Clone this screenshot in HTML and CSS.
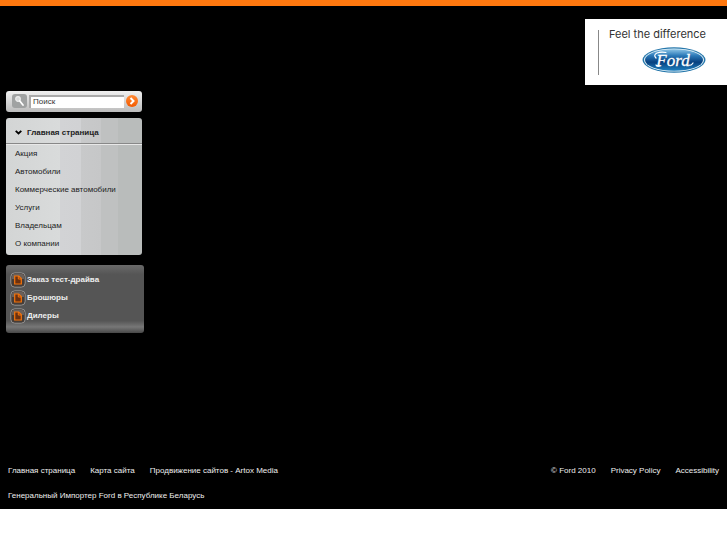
FILE: index.html
```html
<!DOCTYPE html>
<html lang="ru">
<head>
<meta charset="utf-8">
<title>Ford</title>
<link rel="stylesheet" href="styles.css">
</head>
<body>
<div class="page">
  <header class="header">
    <a class="brand" href="#">
      <span class="slogan">Feel the difference</span>
      <svg class="oval" viewBox="0 0 64 26" role="img" aria-label="Ford">
        <defs>
          <linearGradient id="blue" x1="0" y1="0" x2="0" y2="1">
            <stop offset="0" stop-color="#8cc4e6"/>
            <stop offset=".3" stop-color="#2b79b8"/>
            <stop offset=".6" stop-color="#07407f"/>
            <stop offset="1" stop-color="#1e80c0"/>
          </linearGradient>
        </defs>
        <ellipse cx="32" cy="13" rx="31.5" ry="12.7" fill="#2677ab"/>
        <ellipse cx="32" cy="13" rx="30" ry="11.6" fill="#e4f2f8"/>
        <ellipse cx="32" cy="13" rx="29" ry="10.8" fill="url(#blue)"/>
        <text class="script" x="31" y="19" text-anchor="middle">Ford</text>
        <path d="M14 11q-3-3 1-5 4-1.5 9-.5M18 19q-3 1-4-1M47 18q2 1 4-2" fill="none" stroke="#fff" stroke-width="1.2" stroke-linecap="round"/>
      </svg>
    </a>
  </header>
  <aside class="sidebar">
    <form class="search">
      <svg class="lens" viewBox="0 0 15 14" aria-hidden="true">
        <rect width="15" height="14" rx="3" fill="#a0a2a2"/>
        <circle cx="6" cy="5" r="2.3" fill="#d8dada" stroke="#eee" stroke-width="1.2"/>
        <path d="M7.8 7l3.2 4" stroke="#fff" stroke-width="1.8" stroke-linecap="round"/>
      </svg>
      <input class="query" type="text" value="Поиск" aria-label="Поиск">
      <button class="go" type="submit" aria-label="Найти">
        <svg viewBox="0 0 12 12"><path d="M4.5 3l3 3-3 3" fill="none" stroke="#fff" stroke-width="2"/></svg>
      </button>
    </form>
    <nav class="menu">
      <a class="menu-head" href="#">
        <svg class="chevron" viewBox="0 0 7 5" aria-hidden="true"><path d="M.7.8l2.8 2.7L6.3.8" fill="none" stroke="#000" stroke-width="1.8"/></svg>
        Главная страница
      </a>
      <ul class="menu-list">
        <li><a href="#">Акция</a></li>
        <li><a href="#">Автомобили</a></li>
        <li><a href="#">Коммерческие автомобили</a></li>
        <li><a href="#">Услуги</a></li>
        <li><a href="#">Владельцам</a></li>
        <li><a href="#">О компании</a></li>
      </ul>
    </nav>
    <svg class="symbols" aria-hidden="true">
      <symbol id="doc" viewBox="0 0 16 16">
        <rect x=".8" y=".8" width="14.4" height="14.4" rx="4" fill="#453c37" stroke="#929292"/>
        <path d="M2 7V4q0-2 2-2h8q2 0 2 2v3z" fill="#69605b"/>
        <path d="M4.7 4h4l2.6 2.6V12H4.7z" fill="#6a3010" stroke="#f5750c" stroke-width="1.2"/>
        <path d="M8.3 4v3h3" fill="none" stroke="#f5750c"/>
      </symbol>
    </svg>
    <ul class="promo">
      <li><a href="#"><svg class="doc"><use href="#doc"/></svg>Заказ тест-драйва</a></li>
      <li><a href="#"><svg class="doc"><use href="#doc"/></svg>Брошюры</a></li>
      <li><a href="#"><svg class="doc"><use href="#doc"/></svg>Дилеры</a></li>
    </ul>
  </aside>
  <footer class="footer">
    <div class="footer-row">
      <nav class="links">
        <a href="#">Главная страница</a>
        <a href="#">Карта сайта</a>
        <a href="#">Продвижение сайтов - Artox Media</a>
      </nav>
      <nav class="links">
        <span>© Ford 2010</span>
        <a href="#">Privacy Policy</a>
        <a href="#">Accessibility</a>
      </nav>
    </div>
    <p class="importer">Генеральный Импортер Ford в Республике Беларусь</p>
  </footer>
</div>
</body>
</html>
```
FILE: styles.css
```css
* { box-sizing: border-box; }
body {
  margin: 0;
  background: #fff;
  font: 8px/10px "Liberation Sans", Arial, sans-serif;
}
a { color: inherit; text-decoration: none; }
ul { list-style: none; margin: 0; padding: 0; }
.page {
  background: #000;
  border-top: 6px solid #ff780f;
  color: #eee;
}
.header {
  display: flex;
  justify-content: flex-end;
  padding-top: 13px;
}
.brand {
  position: relative;
  display: flex;
  flex-direction: column;
  align-items: flex-end;
  gap: 7px;
  padding: 9px 21px 12px 24px;
  background: #fff;
  color: #333;
}
.brand::before {
  content: "";
  position: absolute;
  left: 13px;
  top: 11px;
  bottom: 10px;
  border-left: 1px solid #888;
}
.slogan { font: 11px/12px Inter, "Liberation Sans", sans-serif; }
.oval { width: 64px; height: 26px; }
.script {
  font: italic 17px "Liberation Serif", serif;
  fill: #fff;
  stroke: #fff;
  stroke-width: 0.3px;
}
.sidebar {
  width: 138px;
  margin: 6px 0 0 6px;
}
.search {
  display: flex;
  align-items: center;
  gap: 2px;
  height: 21px;
  margin: 0 2px 6px 0;
  padding: 0 4px 1px 6px;
  border-radius: 3px;
  background: linear-gradient(#f0f0f0, #bcbcbc);
}
.lens { flex: none; width: 15px; height: 14px; }
.query {
  flex: 1;
  min-width: 0;
  height: 13px;
  padding: 0 2px 2px;
  border: solid #aaa;
  border-width: 2px 0 0 2px;
  border-radius: 0;
  background: #fff;
  color: #333;
  font: inherit;
}
.go {
  flex: none;
  width: 12px;
  height: 12px;
  padding: 0;
  border: 0;
  border-radius: 50%;
  background: linear-gradient(#ff8b36, #f45a00);
}
.go svg { display: block; }
.menu {
  margin: 0 2px 10px 0;
  padding-bottom: 2px;
  border-radius: 3px;
  background: linear-gradient(90deg, #d3d5d5, #d9dbdb 40%, #d2d3d5 40%, #d1d2d4 55%, #c8c9ca 55%, #c6c7c8 70%, #bfc1c1 70%, #bfc1c1 82%, #b9bcbb 82%);
  color: #222;
}
.menu-head {
  display: flex;
  align-items: center;
  gap: 5px;
  height: 26px;
  padding: 4px 9px 0;
  border-bottom: 1px solid #888;
  font-weight: bold;
}
.chevron { flex: none; width: 7px; height: 5px; }
.menu-list { border-top: 1px solid #e8e8e8; }
.menu-list a {
  display: block;
  padding: 4px 9px;
}
.promo {
  padding: 6px 4px 8px;
  border-radius: 3px;
  background: linear-gradient(#6a6a6a, #555 14%, #555 82%, #777 91%, #484848);
  color: #eee;
  font-weight: bold;
}
.promo a {
  display: flex;
  align-items: center;
  gap: 1px;
  padding: 1px 0;
}
.doc { width: 16px; height: 16px; }
.symbols { display: none; }
.footer { padding: 133px 8px 8px; }
.footer-row {
  display: flex;
  justify-content: space-between;
}
.links { display: flex; gap: 15px; }
.importer { margin: 15px 0 0; }
```
